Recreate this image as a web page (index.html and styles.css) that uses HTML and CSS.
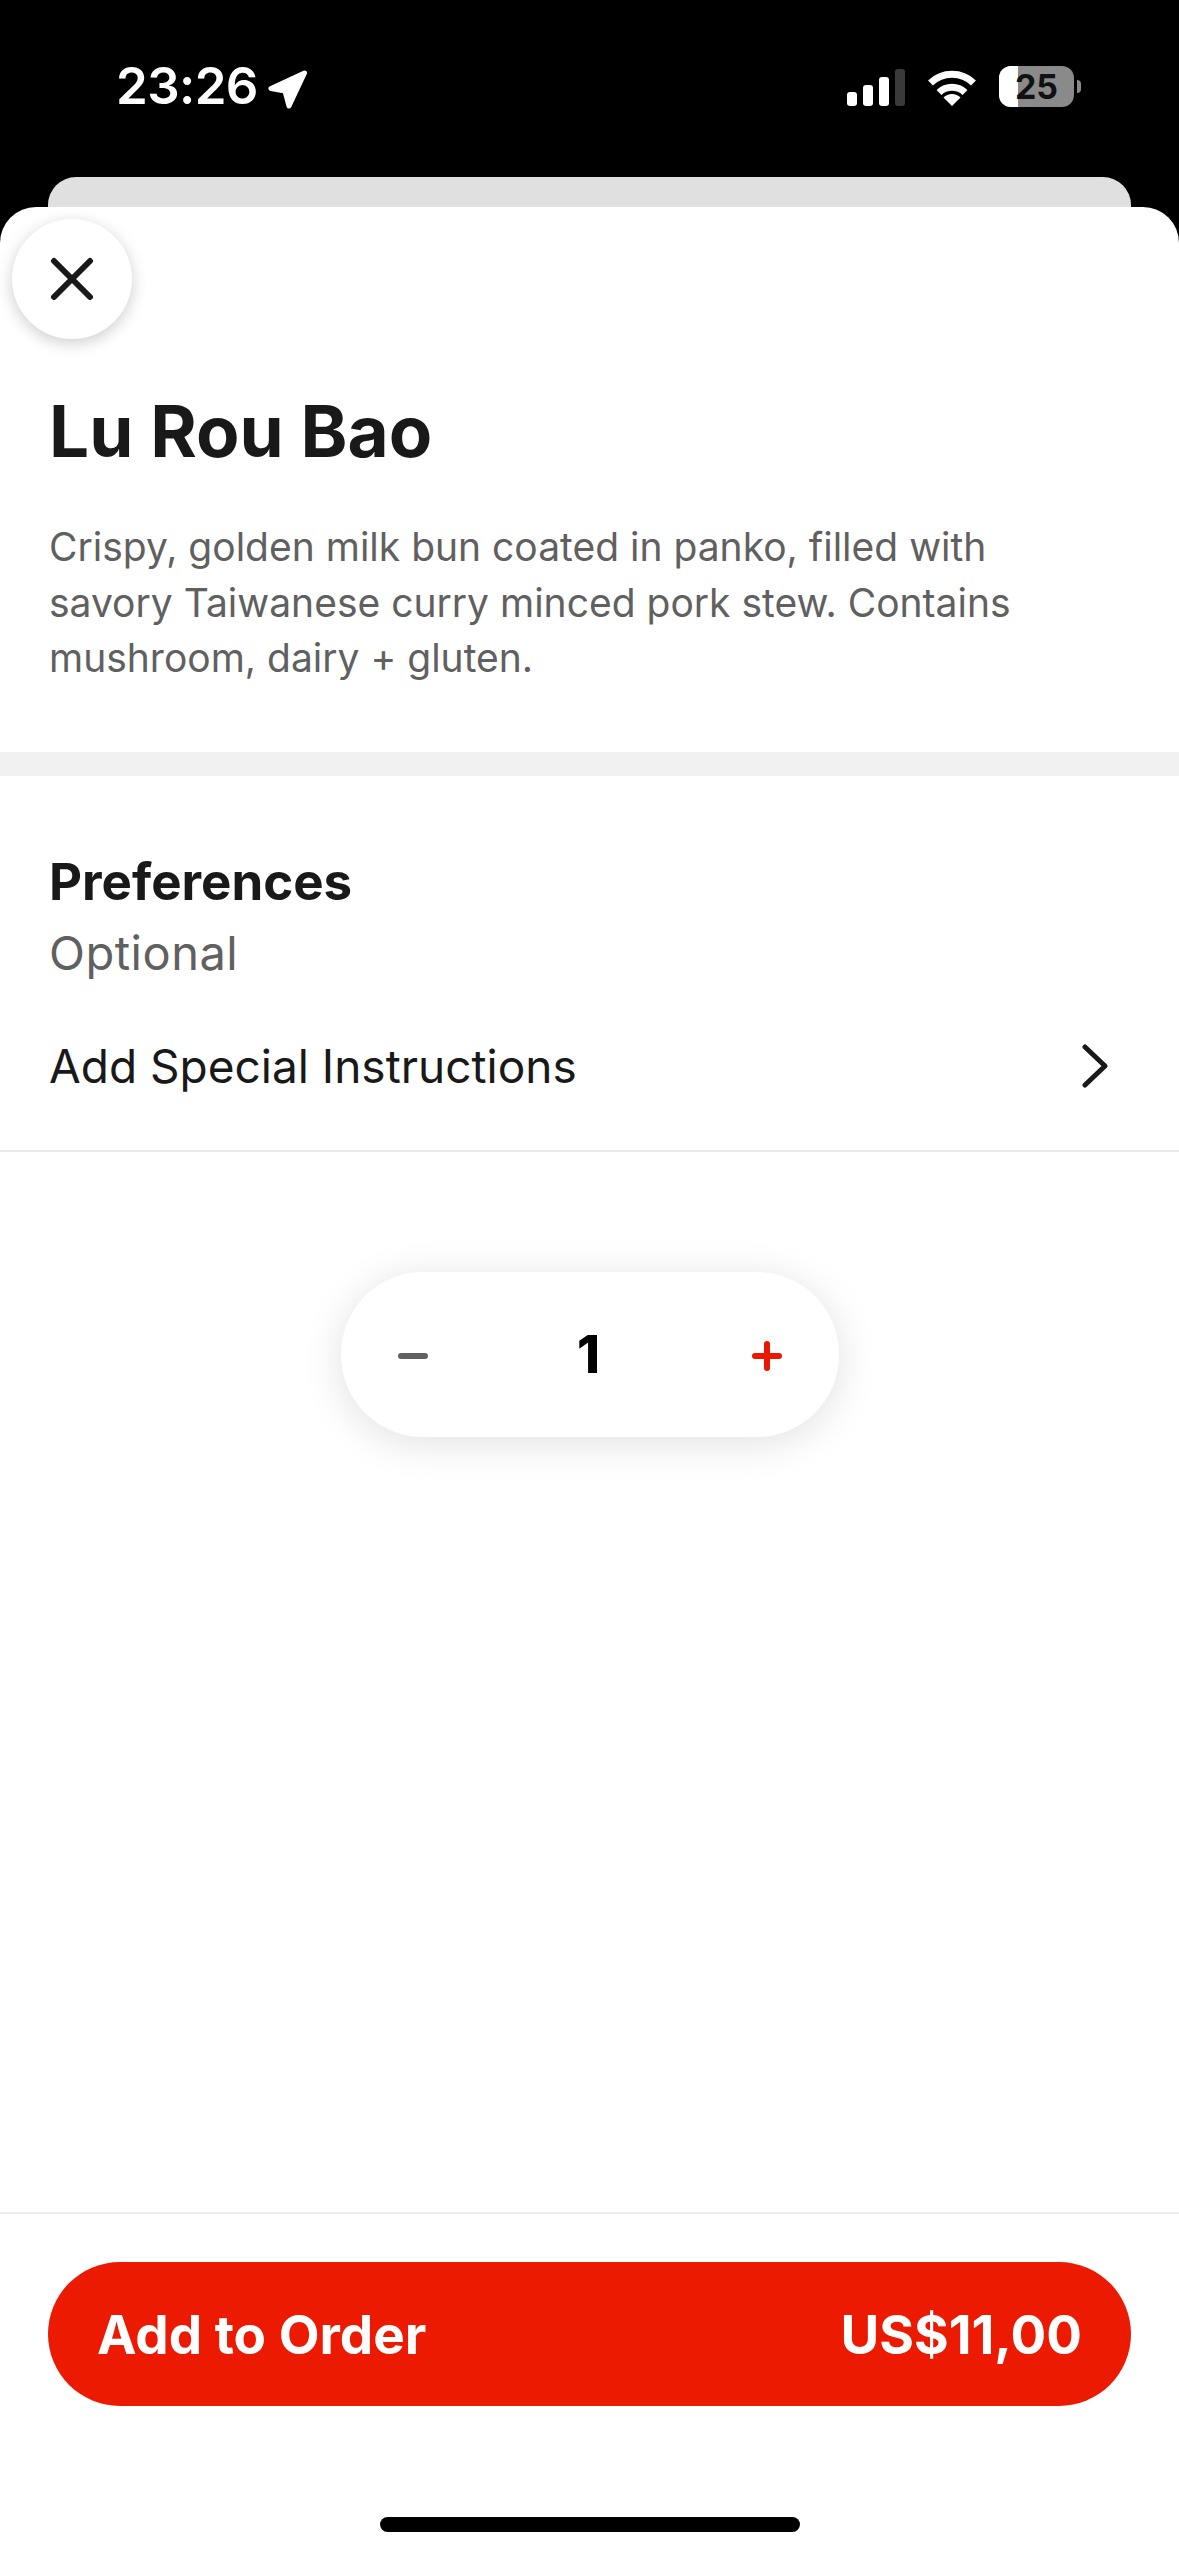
FILE: index.html
```html
<!DOCTYPE html>
<html lang="en">
<head>
<meta charset="utf-8">
<title>Lu Rou Bao</title>
<link rel="stylesheet" href="styles.css">
</head>
<body>
<div class="screen">
  <header class="status">
    <div class="status-left">
      <span class="time">23:26</span>
      <svg class="loc" viewBox="0 0 40 40"><path d="M37.5 3 L4 18.5 L18 21 L22 36 Z" fill="#fff" stroke="#fff" stroke-width="5" stroke-linejoin="round"/></svg>
    </div>
    <div class="status-right">
      <div class="signal"><i class="bar b1"></i><i class="bar b2"></i><i class="bar b3"></i><i class="bar b4"></i></div>
      <svg class="wifi" viewBox="0 0 50 37"><path d="M3.5 14 A31 31 0 0 1 46.5 14" fill="none" stroke="#fff" stroke-width="7" stroke-linecap="butt"/><path d="M12 23.5 A19 19 0 0 1 38 23.5" fill="none" stroke="#fff" stroke-width="7"/><path d="M25 37 L16.5 28.5 A12 12 0 0 1 33.5 28.5 Z" fill="#fff"/></svg>
      <div class="battery"><div class="cell"><span class="level"></span><span class="pct">25</span></div><i class="nub"></i></div>
    </div>
  </header>
  <div class="peek"></div>
  <main class="sheet">
    <button class="close" aria-label="Close">
      <svg viewBox="0 0 44 44"><path d="M4 4 L40 40 M40 4 L4 40" fill="none" stroke="#191919" stroke-width="6" stroke-linecap="round"/></svg>
    </button>
    <section class="intro">
      <h1>Lu Rou Bao</h1>
      <p>Crispy, golden milk bun coated in panko, filled with savory Taiwanese curry minced pork stew. Contains mushroom, dairy + gluten.</p>
    </section>
    <div class="band"></div>
    <section class="prefs">
      <h2>Preferences</h2>
      <div class="optional">Optional</div>
      <div class="row">
        <span>Add Special Instructions</span>
        <svg class="chev" viewBox="0 0 26 44"><path d="M3 3 L23 22 L3 41" fill="none" stroke="#191919" stroke-width="5" stroke-linecap="round" stroke-linejoin="round"/></svg>
      </div>
    </section>
    <div class="stepper-wrap">
      <div class="stepper">
        <svg class="op" viewBox="0 0 30 30"><path d="M3 15 H27" stroke="#606060" stroke-width="6" stroke-linecap="round"/></svg>
        <span class="qty">1</span>
        <svg class="op" viewBox="0 0 30 30"><path d="M3 15 H27 M15 3 V27" stroke="#eb1700" stroke-width="6" stroke-linecap="round"/></svg>
      </div>
    </div>
    <footer class="foot">
      <button class="cta"><span>Add to Order</span><span>US$11,00</span></button>
      <div class="home"></div>
    </footer>
  </main>
</div>
</body>
</html>
```

FILE: styles.css
```css
* { box-sizing: border-box; }
html, body { margin: 0; padding: 0; background: #000; }
.screen {
  width: 1179px; height: 2556px; display: flex; flex-direction: column;
  background: #000; font-family: "Inter", "Noto Sans", sans-serif; overflow: hidden;
}
.status {
  height: 177px; flex: none; padding: 62px 98px 0 116px;
  display: flex; justify-content: space-between; align-items: flex-start;
}
.status-left { display: flex; align-items: center; gap: 9px; height: 48px; }
.time { font: 600 51px/48px "Inter", sans-serif; color: #fff; letter-spacing: -0.6px; }
.loc { width: 40px; height: 40px; margin-top: 7px; }
.status-right { display: flex; align-items: center; gap: 22px; height: 48px; }
.signal { display: flex; align-items: flex-end; gap: 6px; height: 37px; margin-top: 2px; }
.bar { display: block; width: 10px; border-radius: 3px; background: #fff; }
.b1 { height: 14px; } .b2 { height: 21px; } .b3 { height: 29px; }
.b4 { height: 37px; background: #3a3a3a; }
.wifi { width: 50px; height: 37px; margin-top: 2px; }
.battery { display: flex; align-items: center; gap: 3px; }
.cell {
  position: relative; width: 75px; height: 41px; border-radius: 12px; overflow: hidden;
  background: #8a8a8a; display: flex; align-items: center; justify-content: center;
}
.level { position: absolute; left: 0; top: 0; bottom: 0; width: 19px; background: #fff; }
.pct { position: relative; font: 700 34px/41px "Inter", sans-serif; color: #111; }
.nub { display: block; width: 4px; height: 13px; background: #8a8a8a; border-radius: 0 4px 4px 0; }
.peek {
  flex: none; height: 30px; margin: 0 48px; background: #e0e0e0;
  border-radius: 28px 28px 0 0;
}
.sheet {
  flex: 1; background: #fff; border-radius: 36px 36px 0 0;
  display: flex; flex-direction: column; min-height: 0;
}
.close {
  flex: none; width: 120px; height: 120px; margin: 12px 0 0 12px; padding: 0; border: 0;
  border-radius: 50%; background: #fff; box-shadow: 0 4px 16px rgba(0,0,0,.2);
  display: flex; align-items: center; justify-content: center;
}
.close svg { width: 44px; height: 44px; }
.intro { padding: 49px 49px 0; height: 413px; flex: none; }
h1 { margin: 0; font: 700 71px/86px "Inter", sans-serif; color: #191919; letter-spacing: 0; }
.intro p { margin: 45px 0 0; font-size: 39px; line-height: 55.5px; color: #606060; letter-spacing: 0; max-width: 1040px; }
.band { flex: none; height: 24px; background: #f1f1f1; }
.prefs { flex: none; height: 376px; padding: 75px 49px 0; border-bottom: 2px solid #e9e9e9; }
h2 { margin: 0; font-size: 51px; line-height: 62px; font-weight: 700; color: #191919; }
.optional { font-size: 47px; line-height: 54px; margin-top: 13px; color: #606060; letter-spacing: 0.5px; }
.row {
  display: flex; justify-content: space-between; align-items: center;
  margin-top: 56px; font-size: 46px; line-height: 60px; color: #191919; padding-right: 22px;
}
.chev { width: 26px; height: 44px; }
.stepper-wrap { flex: none; padding-top: 120px; display: flex; justify-content: center; }
.stepper {
  width: 498px; height: 165px; border-radius: 82px; background: #fff;
  box-shadow: 0 6px 40px rgba(0,0,0,.12);
  display: flex; align-items: center; justify-content: space-between; padding: 0 56px 0 57px;
}
.op { width: 30px; height: 30px; margin-top: 2px; }
.qty { font: 800 52px/60px "Inter", sans-serif; color: #000; margin-right: 3px; }
.foot {
  flex: none; margin-top: auto; height: 344px; border-top: 2px solid #ececec;
  padding: 48px 48px 0; display: flex; flex-direction: column; align-items: center;
}
.cta {
  width: 100%; height: 144px; border: 0; border-radius: 72px; background: #eb1a00; color: #fff;
  display: flex; justify-content: space-between; align-items: center; padding: 2px 49px 0;
  font: 700 53px/60px "Inter", sans-serif;
}
.home { width: 420px; height: 15px; border-radius: 8px; background: #000; margin-top: 111px; }
```
